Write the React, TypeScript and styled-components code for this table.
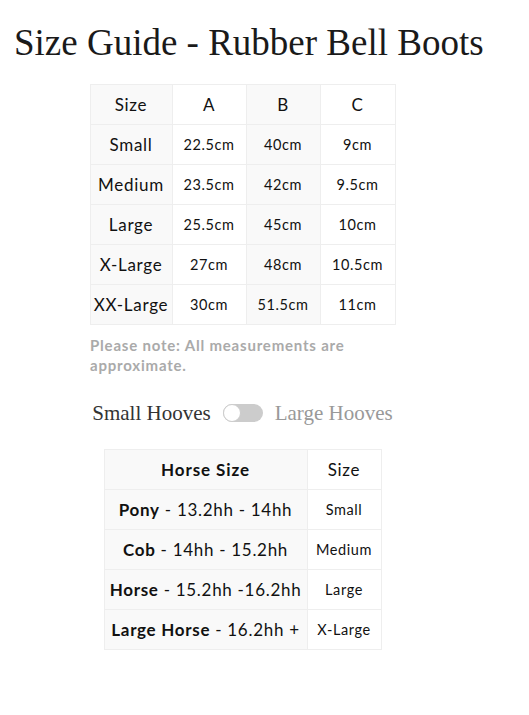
import React, { useState } from "react";
import styled, { createGlobalStyle } from "styled-components";

const GlobalStyle = createGlobalStyle`
  body {
    margin: 0;
    background: #fff;
    color: #222;
    font-family: Lato, "Open Sans", sans-serif;
  }
`;

const sizes = [
  { size: "Small", a: "22.5cm", b: "40cm", c: "9cm" },
  { size: "Medium", a: "23.5cm", b: "42cm", c: "9.5cm" },
  { size: "Large", a: "25.5cm", b: "45cm", c: "10cm" },
  { size: "X-Large", a: "27cm", b: "48cm", c: "10.5cm" },
  { size: "XX-Large", a: "30cm", b: "51.5cm", c: "11cm" },
];

const horses = [
  { name: "Pony", range: "13.2hh - 14hh", size: "Small" },
  { name: "Cob", range: "14hh - 15.2hh", size: "Medium" },
  { name: "Horse", range: "15.2hh -16.2hh", size: "Large" },
  { name: "Large Horse", range: "16.2hh +", size: "X-Large" },
];

const App = () => {
  const [large, setLarge] = useState(false);

  return (
    <Page>
      <GlobalStyle />
      <Title>Size Guide - Rubber Bell Boots</Title>

      <SizeTable>
        <colgroup>
          <col width={82} />
          <col width={74} />
          <col width={74} />
          <col width={75} />
        </colgroup>
        <thead>
          <tr>
            <HeadCell>Size</HeadCell>
            <HeadCell>A</HeadCell>
            <HeadCell>B</HeadCell>
            <HeadCell>C</HeadCell>
          </tr>
        </thead>
        <tbody>
          {sizes.map((row) => (
            <tr key={row.size}>
              <LabelCell>{row.size}</LabelCell>
              <Cell>{row.a}</Cell>
              <Cell>{row.b}</Cell>
              <Cell>{row.c}</Cell>
            </tr>
          ))}
        </tbody>
      </SizeTable>

      <Note>Please note: All measurements are approximate.</Note>

      <ToggleRow>
        <ToggleLabel active={!large}>Small Hooves</ToggleLabel>
        <Switch on={large} onClick={() => setLarge(!large)}>
          <Knob on={large} />
        </Switch>
        <ToggleLabel active={large}>Large Hooves</ToggleLabel>
      </ToggleRow>

      <HorseTable>
        <colgroup>
          <col width={203} />
          <col width={74} />
        </colgroup>
        <thead>
          <tr>
            <HeadCell bold>Horse Size</HeadCell>
            <HeadCell>Size</HeadCell>
          </tr>
        </thead>
        <tbody>
          {horses.map((row) => (
            <tr key={row.name}>
              <LabelCell>
                <b>{row.name}</b> - {row.range}
              </LabelCell>
              <Cell>{row.size}</Cell>
            </tr>
          ))}
        </tbody>
      </HorseTable>
    </Page>
  );
};

export default App;

const Page = styled.div`
  width: 457px;
  margin-left: 14px;
  padding-top: 22px;
  padding-bottom: 60px;
  display: flex;
  flex-direction: column;
  align-items: center;
`;

const Title = styled.h1`
  align-self: flex-start;
  margin: 0 0 20px;
  white-space: nowrap;
  font-family: "Liberation Serif", "DejaVu Serif", serif;
  font-weight: 400;
  font-size: 37px;
  line-height: 42px;
  color: #1a1a1a;
`;

const Table = styled.table`
  border-collapse: collapse;
  table-layout: fixed;
  border: 1px solid #eee;
  text-align: center;

  td,
  th {
    border: 1px solid #eee;
    height: 39px;
    padding: 0;
  }

  td:nth-child(odd),
  th:nth-child(odd) {
    background: #f9f9f9;
  }
`;

const SizeTable = styled(Table)`
  width: 305px;
`;

const HorseTable = styled(Table)`
  width: 277px;
`;

const HeadCell = styled.th<{ bold?: boolean }>`
  font-size: 17px;
  font-weight: ${({ bold }) => (bold ? 700 : 400)};
  letter-spacing: ${({ bold }) => (bold ? "0.9px" : "0.7px")};
  color: #111;
`;

const LabelCell = styled.td`
  font-size: 17px;
  letter-spacing: 0.7px;
  color: #111;
  white-space: nowrap;

  b {
    font-weight: 700;
  }
`;

const Cell = styled.td`
  font-size: 14.5px;
  letter-spacing: 0.6px;
  color: #111;
  white-space: nowrap;
`;

const Note = styled.p`
  width: 305px;
  margin: 10px 0 0;
  font-size: 15px;
  font-weight: 700;
  line-height: 20px;
  letter-spacing: 0.8px;
  color: #aaa;
`;

const ToggleRow = styled.div`
  display: flex;
  align-items: center;
  gap: 12px;
  margin: 25px 0 23px;
`;

const ToggleLabel = styled.span<{ active: boolean }>`
  font-family: "Liberation Serif", "DejaVu Serif", serif;
  font-size: 21px;
  line-height: 26px;
  color: ${({ active }) => (active ? "#333" : "#999")};
`;

const Switch = styled.div<{ on: boolean }>`
  position: relative;
  width: 40px;
  height: 18px;
  border-radius: 9px;
  background: ${({ on }) => (on ? "#8bc34a" : "#ccc")};
  cursor: pointer;
`;

const Knob = styled.div<{ on: boolean }>`
  position: absolute;
  top: 0;
  left: ${({ on }) => (on ? "22px" : "0")};
  width: 16px;
  height: 16px;
  border-radius: 50%;
  background: #fff;
  border: 1px solid #ccc;
`;
